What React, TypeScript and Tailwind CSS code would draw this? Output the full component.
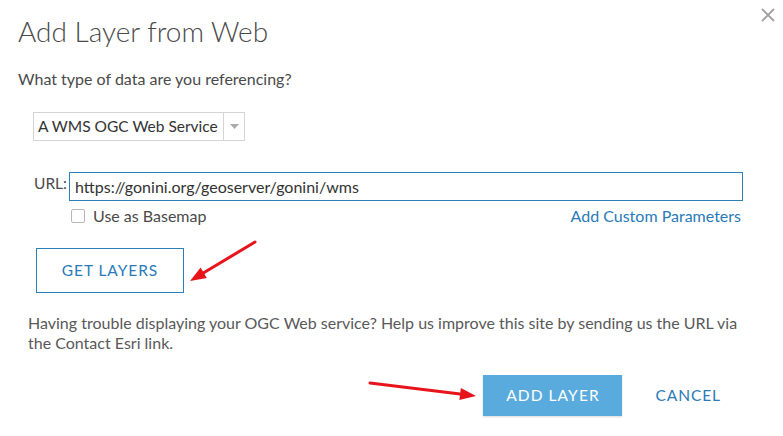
import React from "react";

const font = { fontFamily: "Lato, 'Open Sans', sans-serif" };

function Arrow({ x1, y1, x2, y2 }: { x1: number; y1: number; x2: number; y2: number }) {
  const ang = Math.atan2(y2 - y1, x2 - x1);
  const len = 16;
  const w = 6;
  const bx = x2 - Math.cos(ang) * len;
  const by = y2 - Math.sin(ang) * len;
  const px = -Math.sin(ang) * w;
  const py = Math.cos(ang) * w;
  return (
    <g>
      <line x1={x1} y1={y1} x2={bx} y2={by} stroke="#e8141b" strokeWidth={3} strokeLinecap="round" />
      <polygon points={`${x2},${y2} ${bx + px},${by + py} ${bx - px},${by - py}`} fill="#e8141b" />
    </g>
  );
}

export default function App() {
  return (
    <div className="relative w-[783px] h-[436px] bg-white text-[#4a4a4a] overflow-hidden" style={font}>
      <button className="absolute right-[6px] top-[6px] w-[18px] h-[18px] flex items-center justify-center">
        <svg width="14" height="14" viewBox="0 0 14 14">
          <path d="M1 1L13 13M13 1L1 13" stroke="#a0a0a0" strokeWidth="1.8" />
        </svg>
      </button>

      <div className="flex flex-col pl-[18px] pr-[40px] pt-[14px]">
        <h1 className="text-[28px] font-light leading-[34px] text-[#4a4a4a]">Add Layer from Web</h1>
        <p className="mt-[21px] text-[16px] leading-[20px] text-[#4a4a4a]">What type of data are you referencing?</p>

        <div className="ml-[15px] mt-[23px] flex w-[212px] h-[29px] border border-[#d4d4d4]">
          <span className="flex-1 pl-[4px] text-[15.5px] leading-[27px] text-[#333]">A WMS OGC Web Service</span>
          <span className="w-[21px] border-l border-[#d4d4d4] flex items-center justify-center">
            <svg width="9" height="5" viewBox="0 0 9 5">
              <path d="M0 0H9L4.5 5Z" fill="#aaaaaa" />
            </svg>
          </span>
        </div>

        <div className="mt-[31px] flex items-start ml-[16px]">
          <span className="text-[15.5px] leading-[20px] mt-[1px] w-[36px] text-[#4a4a4a]">URL:</span>
          <div className="flex-1 flex flex-col">
            <div className="h-[29px] border border-[#2d7fb9] px-[5px] text-[16px] leading-[27px] text-[#333] w-[674px]">
              https://gonini.org/geoserver/gonini/wms
            </div>
            <div className="mt-[5px] flex items-center justify-between w-[674px]">
              <label className="flex items-center gap-[8px] ml-[2px]">
                <span className="w-[14px] h-[14px] border border-[#b8b8b8] rounded-[2px] bg-white" />
                <span className="text-[16px] leading-[20px] text-[#4a4a4a]">Use as Basemap</span>
              </label>
              <span className="text-[16px] leading-[20px] text-[#2a7ab8] mr-[2px]">Add Custom Parameters</span>
            </div>
          </div>
        </div>

        <button className="mt-[22px] ml-[18px] w-[148px] h-[45px] border border-[#2d7fb9] text-[#2a7ab8] text-[15.5px] tracking-[0.06em]">
          GET LAYERS
        </button>

        <p className="mt-[20px] ml-[10px] w-[716px] text-[16px] leading-[20px] text-[#595959]">
          Having trouble displaying your OGC Web service? Help us improve this site by sending us the URL via the Contact Esri link.
        </p>

        <div className="mt-[22px] flex items-center justify-end gap-[33px] pr-[22px]">
          <button className="w-[139px] h-[41px] bg-[#5aabdd] text-white text-[15.5px] tracking-[0.07em] shadow-[0_1px_2px_rgba(0,0,0,0.15)]">
            ADD LAYER
          </button>
          <button className="text-[#2a7ab8] text-[15.5px] tracking-[0.06em]">CANCEL</button>
        </div>
      </div>

      <svg className="absolute left-0 top-0 pointer-events-none" width="783" height="436">
        <Arrow x1={255} y1={242} x2={190} y2={281} />
        <Arrow x1={370} y1={383} x2={476} y2={396} />
      </svg>
    </div>
  );
}
